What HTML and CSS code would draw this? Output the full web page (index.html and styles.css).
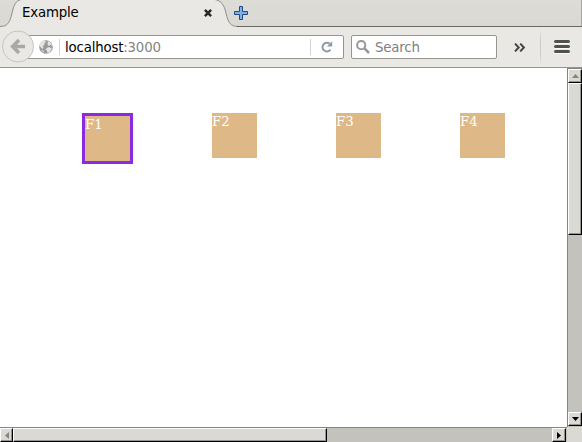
FILE: index.html
```html
<!DOCTYPE html>
<html lang="en">
<head>
<meta charset="utf-8">
<title>Example</title>
<link rel="stylesheet" href="styles.css">
</head>
<body>
<header class="tabs">
  <svg class="tab-shape" width="582" height="27" viewBox="0 0 582 27">
    <path d="M0 26.5C7 26.5 10 23 12 13C14 4 16 1 21 -.5H215C221 1 224 4 226 13C228 23 231 26.5 238 26.5V27H0Z" fill="#e9e8e4"/>
    <path d="M0 26.5C7 26.5 10 23 12 13C14 4 16 1 21 -.5M215 -.5C221 1 224 4 226 13C228 23 231 26.5 238 26.5" fill="none" stroke="#8d8e8e"/>
    <path d="M237 26.5H582" stroke="#686963"/>
    <path d="M581.5 0V26" stroke="#a5a49e"/>
  </svg>
  <div class="tab">
    <span>Example</span>
    <svg width="8" height="8" viewBox="0 0 8 8"><path d="M.9 .9L7.1 7.1M7.1 .9L.9 7.1" stroke="#252a28" stroke-width="2.5"/></svg>
  </div>
  <svg class="plus" width="14" height="14" viewBox="0 0 14 14"><path d="M5.5 .5H8.5V5.5H13.5V8.5H8.5V13.5H5.5V8.5H.5V5.5H5.5Z" fill="#80b0e0" stroke="#204a87"/></svg>
</header>
<nav class="toolbar">
  <div class="address">
    <svg class="globe" width="14" height="14" viewBox="0 0 14 14"><circle cx="7" cy="7" r="6.8" fill="#999a99"/><path d="M.8 3.8L2.5 1.8L5.5 .8L7 2L5.2 3.5L5.5 5L3.5 6L4.5 7.5L3.5 9L1 6.5ZM9 1L12 3L13.2 6L11.5 4.8L10.2 6L8.5 4.5ZM8 8L10 7L12.8 8.5L11 12L8.5 13L8 10.8L6.5 9.5ZM2 10L4.5 10.5L5 12.8Z" fill="#e4e4e2"/></svg>
    <i class="rule"></i>
    <span class="url">localhost<span class="port">:3000</span></span>
    <i class="rule"></i>
    <svg class="reload" width="12" height="12" viewBox="0 0 12 12"><path d="M8.6 2.6A4.4 4.4 0 1 0 9.4 8.7" fill="none" stroke="#8b9aa9" stroke-width="2"/><path d="M11.2 .3V5.6H5.9Z" fill="#8b9aa9"/></svg>
  </div>
  <svg class="back" width="33" height="33" viewBox="0 0 33 33"><circle cx="16" cy="16.5" r="15.5" fill="#e9e8e4" stroke="#c5c4be"/><path d="M17 10L10.7 16.5L17 23M11.5 16.5H23" fill="none" stroke="#aaa9a6" stroke-width="3.6"/></svg>
  <div class="search">
    <svg width="14" height="14" viewBox="0 0 14 14"><circle cx="5.2" cy="5.2" r="4.1" fill="none" stroke="#989898" stroke-width="2"/><path d="M8.2 8.2L13 13" stroke="#989898" stroke-width="2.5"/></svg>
    <span>Search</span>
  </div>
  <svg class="more" width="12" height="9" viewBox="0 0 12 9"><path d="M1 .6L4.7 4.5L1 8.4M6.2 .6L9.9 4.5L6.2 8.4" fill="none" stroke="#424744" stroke-width="2"/></svg>
  <i class="divider"></i>
  <svg class="menu" width="16" height="14" viewBox="0 0 16 14"><path d="M1.5 2.2H14.5M1.5 7.2H14.5M1.5 12.2H14.5" stroke="#fff" stroke-width="3" stroke-linecap="round"/><path d="M1.5 1.5H14.5M1.5 6.5H14.5M1.5 11.5H14.5" stroke="#4e5350" stroke-width="3" stroke-linecap="round"/></svg>
</nav>
<div class="view">
  <main class="page">
    <div class="box active">F1</div>
    <div class="box">F2</div>
    <div class="box">F3</div>
    <div class="box">F4</div>
  </main>
  <div class="vbar">
    <div class="raised step"><svg width="7" height="4"><path d="M0 4L3.5 0L7 4Z" fill="#858580"/></svg></div>
    <div class="raised vthumb"></div>
    <div class="raised step end"><svg width="7" height="4"><path d="M0 0H7L3.5 4Z" fill="#000"/></svg></div>
  </div>
  <div class="hbar">
    <div class="raised hstep"><svg width="4" height="7"><path d="M4 0V7L0 3.5Z" fill="#858580"/></svg></div>
    <div class="raised hthumb"></div>
    <div class="raised hstep right"><svg width="4" height="7"><path d="M0 0V7L4 3.5Z" fill="#000"/></svg></div>
  </div>
  <div class="corner"></div>
</div>
</body>
</html>
```
FILE: styles.css
```css
* { box-sizing: border-box; }
body {
  margin: 0;
  width: 582px;
  height: 442px;
  overflow: hidden;
  background: #fff;
  font: 13.33px/16px "DejaVu Sans", sans-serif;
  letter-spacing: -.18px;
  color: #000;
}
svg { display: block; flex: none; }
.tabs {
  position: relative;
  display: flex;
  height: 27px;
  background: linear-gradient(#dddcd7, #d9d8d2);
}
.tab-shape { position: absolute; inset: 0; }
.tab {
  position: relative;
  display: flex;
  align-items: center;
  justify-content: space-between;
  width: 212px;
  height: 26px;
  padding-left: 22px;
}
.plus { position: relative; margin: 6px 0 0 22px; }
.toolbar {
  position: relative;
  display: flex;
  align-items: center;
  height: 41px;
  background: #e9e8e4;
  border-bottom: 1px solid #95958d;
}
.address, .search {
  display: flex;
  align-items: center;
  height: 24px;
  background: #fff;
  border: 1px solid #96968e;
  border-radius: 2px;
}
.address { width: 324px; margin-left: 20px; padding-left: 18px; }
.rule { width: 1px; height: 16px; background: #d3d3d0; }
.globe { margin-right: 6px; }
.url { width: 245px; margin-left: 5px; padding-top: 2px; }
.port { color: #858585; }
.reload { margin-left: 10px; }
.back { position: absolute; left: 2px; top: 3px; }
.search { width: 146px; margin-left: 7px; padding-left: 4px; gap: 5px; color: #808080; }
.search span { padding-top: 2px; }
.more { margin-left: 17px; }
.divider {
  width: 1px;
  height: 36px;
  margin-left: 14px;
  background: linear-gradient(transparent, #cccbc5 30%, #cccbc5 70%, transparent);
}
.menu { margin-left: 13px; }
.view {
  display: grid;
  grid-template: 359px 15px / 567px 15px;
}
.page {
  display: flex;
  align-items: flex-start;
  gap: 79px;
  padding: 45px 0 0 82px;
}
.box {
  box-sizing: content-box;
  width: 45px;
  height: 45px;
  background: #deb887;
  color: #fff;
  font: 13.33px/17px "DejaVu Serif", serif;
  letter-spacing: 0;
}
.active { border: 3px solid #8a2be2; }
.vbar, .hbar { display: flex; background: #c3c2bc; }
.vbar {
  flex-direction: column;
  padding-bottom: 1px;
  border-left: 1px solid #858580;
  border-top: 1px solid #858580;
}
.hbar { border-top: 1px solid #858580; }
.raised {
  display: flex;
  align-items: center;
  justify-content: center;
  background: #dad9d4;
  border: 1px solid;
  border-color: #fff #000 #000 #fff;
  box-shadow: inset -1px -1px #96958e;
}
.step { height: 14px; }
.vthumb { height: 152px; }
.end { margin-top: auto; }
.hstep { width: 13px; }
.hthumb { width: 314px; }
.right { width: 14px; margin-left: auto; margin-right: 1px; }
.corner { background: #dad9d4; }
```
